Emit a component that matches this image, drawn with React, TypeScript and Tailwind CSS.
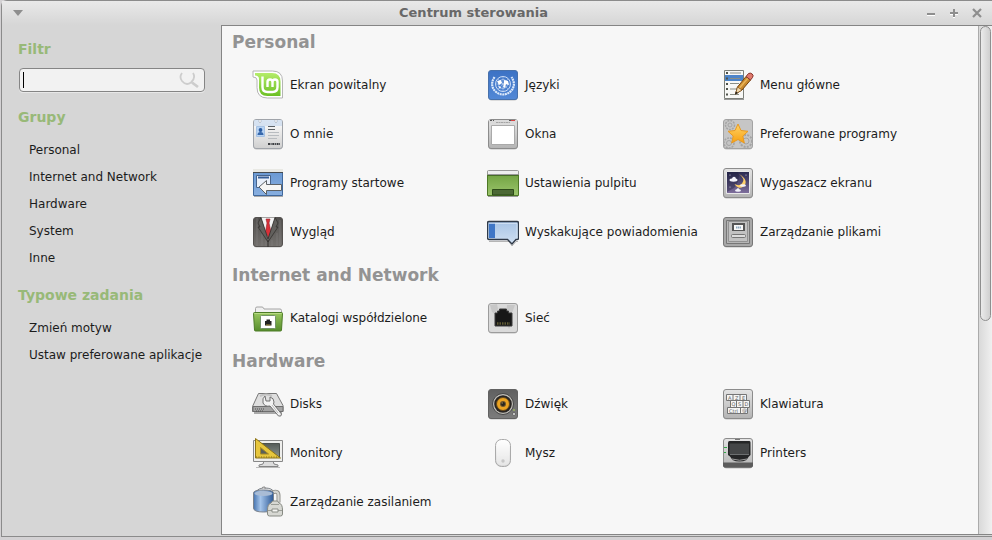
import type { ReactNode } from 'react';

function Svg({ children }: { children: ReactNode }) {
  return (
    <svg viewBox="0 0 32 32" className="h-8 w-8 shrink-0" aria-hidden="true">
      {children}
    </svg>
  );
}

function Tile({ fill = 'url(#metal)', stroke = '#8c8c8c' }: { fill?: string; stroke?: string }) {
  return (
    <>
      <rect x="1.5" y="2" width="29" height="29.5" rx="3" fill="#000" opacity=".22" />
      <rect x="1.5" y="1.5" width="29" height="29" rx="2.5" fill={fill} stroke={stroke} />
    </>
  );
}

function Gradients() {
  const g = (id: string, a: string, b: string) => (
    <linearGradient id={id} x1="0" y1="0" x2="0" y2="1">
      <stop offset="0" stopColor={a} />
      <stop offset="1" stopColor={b} />
    </linearGradient>
  );
  return (
    <svg width="0" height="0" className="absolute" aria-hidden="true">
      <defs>
        {g('metal', '#e4e4e4', '#b4b4b4')}
        {g('pale', '#ffffff', '#cfcfcf')}
        {g('mint', '#b4ec6a', '#6cc024')}
        {g('blue', '#3c72c4', '#5288d6')}
        {g('sky', '#6897d2', '#88afe0')}
        {g('green', '#6c9f3c', '#9bc46c')}
        {g('folder', '#9ac860', '#568c2c')}
        {g('night', '#28284e', '#80709e')}
        {g('dark', '#606060', '#7c7c7c')}
        {g('suit', '#52504e', '#73706d')}
        {g('star', '#ffd468', '#f8a010')}
        {g('screen', '#555b57', '#8d9590')}
        {g('bubble', '#a8c4e6', '#d0e0f2')}
        <linearGradient id="tank">
          <stop offset="0" stopColor="#4674b0" />
          <stop offset=".35" stopColor="#a4c4ea" />
          <stop offset="1" stopColor="#2d5996" />
        </linearGradient>
      </defs>
    </svg>
  );
}

const icons = {
  mint: (
    <Svg>
      <path d="M1 2h19.500q10 0 10 10V29H15.500Q5 29 5 18.500V11Q5 8 1 8Z" fill="#fff" stroke="#b5b5b5" />
      <path d="M3 4h17q8.500 0 8.500 8.500V27H15.500Q7 27 7 18.500V10Q7 6.500 3 6.500Z" fill="url(#mint)" />
      <path d="M10.500 7.500v10.500q0 5 5 5h5q5 0 5-5v-5q0-2.500-2.500-2.500t-2.500 2.500V18M20.500 13q0-2.500-2.500-2.500t-2.500 2.500v5" fill="none" stroke="#fff" strokeWidth="2.400" />
    </Svg>
  ),
  un: (
    <Svg>
      <Tile fill="url(#blue)" stroke="#4871ab" />
      <g fill="none" stroke="#dce9fa">
        <circle cx="16" cy="15" r="7.500" strokeWidth=".9" />
        <circle cx="16" cy="15" r="4.500" strokeWidth=".5" />
        <path d="M7.500 8Q2.500 16 8 22q3.500 3.500 8 3.500t8-3.500q5.500-6 .5-14" strokeWidth="2.200" strokeDasharray="2 .6" />
        <path d="M16 8v14M9 15h14M11 10l10 10M21 10L11 20" strokeWidth=".4" />
      </g>
      <path d="m10 12 4-1 1 3-3 2zM17 11l4 1 1 4-3-1-1 4-2-1 1-3zM11 17l3 1-1 2z" fill="#fff" />
    </Svg>
  ),
  menu: (
    <Svg>
      <path d="M2.500 1.500h19v28h-19z" fill="#f8f8f6" stroke="#7c7f79" />
      <path d="M2 30.500h20" stroke="#999" />
      <path d="M3 6h18v6H3z" fill="#4d85c9" />
      <path d="M8 4h11M8 9.500h10M8 14.500h9M8 20h7M8 25.500h9" stroke="#8a8e86" />
      <path d="M4 3h2v2H4zM4 8.500h2v2H4zM4 14h2v2H4zM4 19h2v2H4zM4 24.500h2v2H4z" fill="#50544c" />
      <path d="M13.500 25 15.500 18 24 7.500l4.500 3.500L20 21z" fill="#c98a2e" stroke="#76430b" />
      <path d="m17.500 19 9-10.500" stroke="#eab55a" strokeWidth="1.500" />
      <path d="m24 7.500 2.500-3q2-1 3.700.5t.3 3.500l-2 2.500z" fill="#e07a6e" stroke="#863129" />
      <path d="m13.500 25 2-7 4.500 3z" fill="#f0d9ae" stroke="#76430b" strokeWidth=".6" />
      <path d="m13 25.500 1-3 2 1.500z" fill="#222" />
    </Svg>
  ),
  me: (
    <Svg>
      <Tile fill="url(#pale)" stroke="#a0a4aa" />
      <path d="M2 2h28v6H2z" fill="#c8d8ee" opacity=".7" />
      <path d="M7 2v2q1 2 2 0V2M23 2v2q1 2 2 0V2" fill="#fff" stroke="#9aa5b4" strokeWidth=".6" />
      <path d="M4.500 8.500h8v10h-8z" fill="#b9d4f3" stroke="#a6c2e4" />
      <circle cx="8.500" cy="12" r="1.900" fill="#2a5ca2" />
      <path d="M5.500 17q0-3 3-3t3 3z" fill="#3768ac" />
      <path d="M16 8.500h7M16 11.500h7" stroke="#5c6166" />
      <path d="M16 14.500h11M16 17.500h11M16 20.500h9" stroke="#b8bcc0" />
      <path d="M16 26h12" stroke="#3b3e42" strokeWidth="2" strokeDasharray="2 .6 1 .7" />
    </Svg>
  ),
  win: (
    <Svg>
      <Tile />
      <path d="M2 2h28v4H2z" fill="#dadada" />
      <path d="M3 2.500h2M6 2.500h1M22 2.500h2" stroke="#555" />
      <path d="M24 2.500h4" stroke="#d64343" />
      <path d="M9 4.500h14" stroke="#a5a5a5" strokeDasharray="2 .5" />
      <path d="M4.500 7.500h23v19h-23z" fill="#fff" stroke="#aaa" />
    </Svg>
  ),
  pref: (
    <Svg>
      <Tile fill="#c6c6c6" stroke="#a3a3a3" />
      <g fill="none" stroke="#a4a4a4">
        <circle cx="8" cy="7" r="4.500" strokeWidth="1.500" strokeDasharray="2 1" />
        <circle cx="8" cy="7" r="2" />
        <circle cx="24" cy="23" r="6" strokeWidth="2" strokeDasharray="2 1.200" />
        <circle cx="24" cy="23" r="3" />
        <circle cx="7" cy="25" r="5" strokeWidth="1.500" strokeDasharray="2 1" />
        <circle cx="7" cy="25" r="2.500" />
      </g>
      <path d="m16 6 3 6.500 7 .8-5.200 4.700 1.500 7L16 21.500 9.700 25l1.500-7L6 13.300l7-.8z" fill="url(#star)" stroke="#e79a23" strokeLinejoin="round" />
    </Svg>
  ),
  startup: (
    <Svg>
      <path d="M2 29.500h29" stroke="#aaa" />
      <path d="M1.500 2.500h29v26h-29z" fill="url(#sky)" stroke="#40689c" />
      <path d="M1 2h30v3H1z" fill="#e9e9e4" />
      <path d="M1 5.500h30" stroke="#464b50" />
      <path d="M4.500 8.500h14v12h-14z" fill="#e9f0fa" stroke="#47648c" />
      <path d="M6 10.500h11" stroke="#365e99" strokeWidth="2" />
      <path d="m7 20 7.500-6.500v4h15v6h-15v4z" fill="#f6f6f4" stroke="#5d6266" />
    </Svg>
  ),
  desktop: (
    <Svg>
      <path d="M1 29.500h30" stroke="#9a9a9a" />
      <path d="M.5 4.500h31v24H.5z" fill="url(#green)" stroke="#4d7825" />
      <path d="M.5 4.500q0-1 1-1h29q1 0 1 1v3H.5z" fill="#eee" stroke="#999" />
      <path d="M1 8.500h30" stroke="#466c27" />
      <path d="M5.500 22.500h21v5.500h-21z" fill="#4b6834" stroke="#2d4b19" />
    </Svg>
  ),
  saver: (
    <Svg>
      <Tile />
      <path d="M4.500 4.500h23v22h-23z" fill="url(#night)" stroke="#e8e8e8" />
      <path d="M5 5h11q3 8-4 16L5 25z" fill="#151834" opacity=".35" />
      <path d="M17 7q7 5 3 9.500-3 3-7.500.5 4 6 9 2.500 6-6-4.500-12.500z" fill="#ffd069" />
      <g fill="#f2f2fa">
        <ellipse cx="11.500" cy="13" rx="4" ry="1.700" />
        <circle cx="12" cy="11.500" r="1.800" />
        <ellipse cx="21" cy="18.500" rx="3" ry="1.300" />
        <ellipse cx="16" cy="23.500" rx="3" ry="1.300" />
        <circle cx="16" cy="22.500" r="1.300" />
        <circle cx="8" cy="8" r=".5" />
        <circle cx="24" cy="8" r=".5" />
        <circle cx="8" cy="20" r=".5" />
      </g>
    </Svg>
  ),
  look: (
    <Svg>
      <Tile fill="url(#suit)" stroke="#555250" />
      <path d="M5 2v28M10 18v12M14 24v6M20 24v6M25 17v13M28 4v26" stroke="#858280" strokeWidth=".6" />
      <path d="M9 1.500h14l-7 22z" fill="#f4f4f4" />
      <path d="M14 3h4l-1 4 2 9-2.500 6-3-6L15 7z" fill="#da3038" stroke="#96202a" strokeWidth=".6" />
      <path d="M9 1.500 6 7l2 4H6l10 15L26 11h-2l2-4-3-5.500L16 23z" fill="#62605d" stroke="#33312f" strokeWidth=".8" />
      <path d="M16 24v7" stroke="#33312f" />
    </Svg>
  ),
  bubble: (
    <Svg>
      <path d="M2 25.500h20l3 4.500 4-4.500h2" stroke="#888" fill="none" opacity=".6" />
      <path d="M2 5.500h28q1.500 0 1.500 1.500v15q0 1.500-1.500 1.500h-1L25 28 20.500 23.500H2Q.5 23.500.5 22V7Q.5 5.500 2 5.500z" fill="url(#bubble)" stroke="#303a48" strokeWidth="1.400" />
      <path d="M2 7h6v15H2z" fill="#3f76c6" />
      <path d="M2 7.500h28v15" fill="none" stroke="#dce9f8" strokeWidth=".7" />
    </Svg>
  ),
  cabinet: (
    <Svg>
      <Tile fill="#a8a8a8" stroke="#777" />
      <path d="M4.500 4.500h23v23h-23z" fill="#b6b6b6" stroke="#777" />
      <path d="M6.500 5.500h19v20h-19z" fill="#c2c2c2" stroke="#929292" />
      <path d="M10 7h13v8H10z" fill="#555" />
      <path d="M12 9h9v5h-9z" fill="#f8f8f8" />
      <path d="M14 11.500h5" stroke="#8ca7be" strokeWidth="2" strokeDasharray="1.500 .5" />
      <rect x="9.500" y="18.500" width="14" height="3" rx="1" fill="#ddd" stroke="#777" />
    </Svg>
  ),
  share: (
    <Svg>
      <path d="M3.500 13V6.500q0-1.500 1.500-1.500h5q1 0 1.500 1l.5 1h16q1.500 0 1.500 1.500V13" fill="#f0f0f0" stroke="#a4a4a4" />
      <path d="M1.500 11.500q0-1 1-1h27q1 0 1 1L29.500 28q0 1-1 1h-25q-1 0-1-1z" fill="url(#folder)" stroke="#4d7c27" />
      <path d="M2.500 11.500h27" stroke="#b7da85" />
      <rect x="8.500" y="13.500" width="15" height="13" rx="1" fill="#fff" stroke="#74936a" />
      <path d="M13 23.500v-4.500h1.500v-1.500h3.500V19h1.500v4.500z" fill="#222" />
      <path d="M14 23h4.500" stroke="#a79444" />
    </Svg>
  ),
  net: (
    <Svg>
      <Tile fill="#dadada" stroke="#9c9c9c" />
      <path d="m3 3 7-1 1 5-3 5-3-2zM20 3h8l-3 8-4 4 1 4 4 1-4 7-3-6z" fill="#bababa" opacity=".6" />
      <path d="M8 24V11h2.500V9h2V7h7v2h2v2H25v13z" fill="#171717" stroke="#3c3c3c" />
      <path d="M10 21.500h13" stroke="#5f5a34" strokeWidth="2.500" strokeDasharray="1.500 1" />
    </Svg>
  ),
  disk: (
    <Svg>
      <path d="M2 25h28" stroke="#aaa" strokeWidth="2" />
      <path d="M6.500 5.500h18l6.500 12v6H.5v-5z" fill="#dedede" stroke="#777" />
      <path d="M1 18.500h30v5H1z" fill="#a4a4a4" stroke="#6e6e6e" />
      <path d="M3 21h10M4 23h8" stroke="#505050" strokeDasharray="1 1" />
      <path d="M8 8q6-3 12 0" fill="none" stroke="#c1c1c1" strokeWidth="2" />
      <path d="m13 8 1 5h4V9q4 1 4 5l-.5 2 8 10q0 3-3 2L18 18q-5 1-7-3-1-5 2-7z" fill="#f2f2f2" stroke="#717171" />
      <path d="m20 17 6 8" stroke="#bcbcbc" />
    </Svg>
  ),
  sound: (
    <Svg>
      <Tile fill="url(#dark)" stroke="#626262" />
      <circle cx="16" cy="16" r="10.500" fill="#c0beb8" stroke="#454545" />
      <circle cx="16" cy="16" r="8.800" fill="#292522" />
      <circle cx="16" cy="16" r="6.500" fill="#eba322" stroke="#66491a" />
      <circle cx="16" cy="16" r="3" fill="#6d552d" />
      <circle cx="16" cy="16" r="2" fill="#28251e" />
      <circle cx="15.200" cy="15" r=".7" fill="#a68956" />
      <circle cx="27" cy="22" r=".8" fill="#b4df50" />
      <circle cx="27" cy="26" r="1.500" fill="#ddd" stroke="#333" strokeWidth=".5" />
    </Svg>
  ),
  keys: (
    <Svg>
      <Tile />
      <g fill="#f5f5f5" stroke="#757575">
        <path d="M4.500 6.500h20v6h-20zM11 6.500v6M18 6.500v6" />
        <path d="M8.500 12.500h19v7h-19zM14.500 12.500v7M21 12.500v7" />
        <path d="M5.500 19.500h20v6h-20zM18.500 19.500v6" />
      </g>
      <g fontFamily="DejaVu Sans" fontSize="5" fill="#606060">
        <text x="6" y="11.500">A</text><text x="13" y="11.500">Z</text><text x="20" y="11.500">E</text>
        <text x="9.500" y="18">Q</text><text x="16" y="18">S</text><text x="22.500" y="18">D</text>
        <text x="7" y="24.500">Ctrl</text><text x="20" y="24">@</text>
      </g>
    </Svg>
  ),
  monitor: (
    <Svg>
      <path d="M4 30.500h24" stroke="#bbb" />
      <path d="M12 24h9l1 3 4 1v1.500H7V28l4-1z" fill="#ddd" stroke="#858585" />
      <path d="M1.500 3.500h29v21h-29z" fill="#eeeeec" stroke="#888" />
      <path d="M4.500 6.500h23v14h-23z" fill="url(#screen)" stroke="#4c514e" />
      <path d="M3.500 1.500v19.500h25z" fill="#e7c63d" stroke="#8e7517" />
      <path d="M8.500 10.500V17h8z" fill="#59605b" stroke="#a88a23" />
      <path d="M4 20h22" stroke="#7e6a20" strokeDasharray="1 1.500" />
    </Svg>
  ),
  mouse: (
    <Svg>
      <rect x="8.500" y="2.500" width="15" height="27" rx="6" fill="url(#pale)" stroke="#aaa" />
      <rect x="9.500" y="3.500" width="13" height="25" rx="5" fill="#fff" opacity=".45" />
      <circle cx="16" cy="24" r="1.700" fill="#c7c7c7" />
    </Svg>
  ),
  printer: (
    <Svg>
      <Tile />
      <path d="M1 25.500h30v3q0 2-2 2H3q-2 0-2-2z" fill="#5c5c5c" />
      <path d="M13 2.500h5" stroke="#777" />
      <path d="M7.500 4h20q1 0 1 1.500V18l-2 2-2 3q-3 1.500-7 1.500T10.500 23L8 19.500 6 18V6q0-2 1.500-2z" fill="#252627" />
      <path d="M7.500 6.500H27V17H7.500z" fill="#444647" />
      <path d="M8 17.500h19" stroke="#6c6f70" />
      <path d="M10 22q7.500 2.500 15 0" stroke="#9a9a9a" fill="none" />
      <path d="M2 10.500h3M2 15.500h2" stroke="#31a747" strokeWidth="1.200" />
    </Svg>
  ),
  power: (
    <Svg>
      <path d="M4 6q2-4 9-4t9 4" fill="#ececec" stroke="#7d8289" />
      <path d="M10 2.500q0-2 3-1.500V3" fill="#ddd" stroke="#888" />
      <path d="M20.500 6.500q6-2.500 6 3v7" fill="none" stroke="#8f8f8a" strokeWidth="4" />
      <path d="M20.500 6.500q6-2.500 6 3v7" fill="none" stroke="#d6d6d2" strokeWidth="2.200" />
      <path d="M1.500 7q0-3 10-3t10 3v15q0 4-10 4t-10-4z" fill="url(#tank)" stroke="#7a828d" />
      <ellipse cx="11.500" cy="7.500" rx="9" ry="2.500" fill="#a9bcd5" />
      <path d="M15.500 24q0-6 3.500-7l1.500-2h5l1.500 2q3.500 1 3.500 7v4q0 2-2 2h-11q-2 0-2-2z" fill="#d7d8d3" stroke="#878a83" />
      <path d="M16 24.500h14M19 18.500h8" stroke="#9b9e97" />
      <path d="M20 23h6v3h-6z" fill="#f6f6f4" stroke="#8b8e87" />
    </Svg>
  ),
};

type IconName = keyof typeof icons;

const sections: { title: string; items: [IconName, string][] }[] = [
  {
    title: 'Personal',
    items: [
      ['mint', 'Ekran powitalny'],
      ['un', 'Języki'],
      ['menu', 'Menu główne'],
      ['me', 'O mnie'],
      ['win', 'Okna'],
      ['pref', 'Preferowane programy'],
      ['startup', 'Programy startowe'],
      ['desktop', 'Ustawienia pulpitu'],
      ['saver', 'Wygaszacz ekranu'],
      ['look', 'Wygląd'],
      ['bubble', 'Wyskakujące powiadomienia'],
      ['cabinet', 'Zarządzanie plikami'],
    ],
  },
  {
    title: 'Internet and Network',
    items: [
      ['share', 'Katalogi współdzielone'],
      ['net', 'Sieć'],
    ],
  },
  {
    title: 'Hardware',
    items: [
      ['disk', 'Disks'],
      ['sound', 'Dźwięk'],
      ['keys', 'Klawiatura'],
      ['monitor', 'Monitory'],
      ['mouse', 'Mysz'],
      ['printer', 'Printers'],
      ['power', 'Zarządzanie zasilaniem'],
    ],
  },
];

const groups = ['Personal', 'Internet and Network', 'Hardware', 'System', 'Inne'];
const tasks = ['Zmień motyw', 'Ustaw preferowane aplikacje'];

function SideList({ title, items }: { title: string; items: string[] }) {
  return (
    <nav aria-label={title} className="mt-[10px]">
      <h2 className="mb-[5px] text-sm leading-7 font-bold text-[#98b978]">{title}</h2>
      <ul className="pl-[11px]">
        {items.map((t) => (
          <li key={t}>
            <button type="button" className="block h-[27px] text-left whitespace-nowrap">{t}</button>
          </li>
        ))}
      </ul>
    </nav>
  );
}

function TitleBar() {
  return (
    <header className="flex h-6 items-center bg-linear-to-b from-[#e9e9e9] to-[#d6d6d6] pr-[10px] pl-[11px] text-[#8e8e8e]">
      <button type="button" aria-label="Menu okna" className="w-9 text-left">
        <svg viewBox="0 0 10 6" className="h-[6px] w-[10px]"><path d="M0 0h10L5 6z" fill="currentColor" /></svg>
      </button>
      <h1 className="flex-1 text-center text-[13px] font-bold text-[#686868]">Centrum sterowania</h1>
      <div className="ml-7 flex w-14 justify-between">
        <button type="button" aria-label="Minimalizuj">
          <svg viewBox="0 0 10 10" className="h-[10px] w-[10px]"><path d="M1 7.500h8" stroke="#fff" /><path d="M1 6h8" stroke="currentColor" strokeWidth="2" /></svg>
        </button>
        <button type="button" aria-label="Maksymalizuj">
          <svg viewBox="0 0 10 10" className="h-[10px] w-[10px]"><path d="M1 6.500h8M4 9.500h2" stroke="#fff" /><path d="M1 5h8M5 1v8" stroke="currentColor" strokeWidth="2" /></svg>
        </button>
        <button type="button" aria-label="Zamknij">
          <svg viewBox="0 0 10 10" className="h-[10px] w-[10px]"><path d="m1 1 8 8M9 1 1 9" stroke="currentColor" strokeWidth="2.200" /></svg>
        </button>
      </div>
    </header>
  );
}

export default function App() {
  return (
    <div className="flex min-h-screen flex-col bg-[#d3d1d3] pb-[3px] pl-px font-['DejaVu_Sans',sans-serif] text-xs text-[#1c1c1c]">
      <Gradients />
      <div className="flex flex-1 flex-col rounded-tl-md border border-r-0 border-[#8b8b8b] bg-[#d6d6d6]">
        <TitleBar />
        <div className="flex flex-1 pb-px">
          <aside className="w-[219px] shrink-0 px-4 pt-[10px]">
            <label htmlFor="filter" className="block text-sm leading-7 font-bold text-[#98b978]">Filtr</label>
            <div className="mt-[5px] mb-[11px] ml-px flex h-6 items-center rounded-[4px] border border-[#858585] bg-[#f2f2f2] pr-1 pl-[3px] shadow-[0_1px_0_#e8e8e8]">
              <span className="h-4 w-px shrink-0 bg-black" />
              <input id="filter" type="text" className="h-5 min-w-0 flex-1 bg-transparent outline-none" />
              <svg viewBox="0 0 22 18" className="h-[18px] w-[22px] shrink-0" aria-hidden="true">
                <path d="M4 2q-3 4 0 8 4 5 9 1.500 5-4.500 2-9.500" fill="none" stroke="#cdcdcd" strokeWidth="1.800" />
                <path d="m14 11.500 6 4.500" stroke="#cdcdcd" strokeWidth="2.800" />
              </svg>
            </div>
            <SideList title="Grupy" items={groups} />
            <SideList title="Typowe zadania" items={tasks} />
          </aside>
          <main className="flex min-w-0 flex-1 border border-r-0 border-[#858585] bg-[#f7f7f7]">
            <div id="launchers" className="min-w-0 flex-1 pb-1 pl-[10px]">
              {sections.map((s) => (
                <section key={s.title} className="pb-[3px]">
                  <h2 className="mb-[2px] text-[17px] leading-8 font-bold text-[#939393]">{s.title}</h2>
                  <div className="grid grid-cols-[235px_235px_1fr] pl-5">
                    {s.items.map(([icon, label]) => (
                      <button key={label} type="button" className="flex h-[49px] items-center gap-[6px] text-left whitespace-nowrap">
                        {icons[icon]}
                        <span>{label}</span>
                      </button>
                    ))}
                  </div>
                </section>
              ))}
            </div>
            <div role="scrollbar" aria-controls="launchers" aria-valuenow={0} className="w-[14px] shrink-0 border-l border-[#ababab] bg-linear-to-r from-[#d9d9d9] to-[#f0f0f0] px-px">
              <div className="h-[295px] rounded-full border border-[#8f8f8f] bg-linear-to-r from-[#ebebeb] to-[#cfcfcf]" />
            </div>
          </main>
        </div>
      </div>
    </div>
  );
}
